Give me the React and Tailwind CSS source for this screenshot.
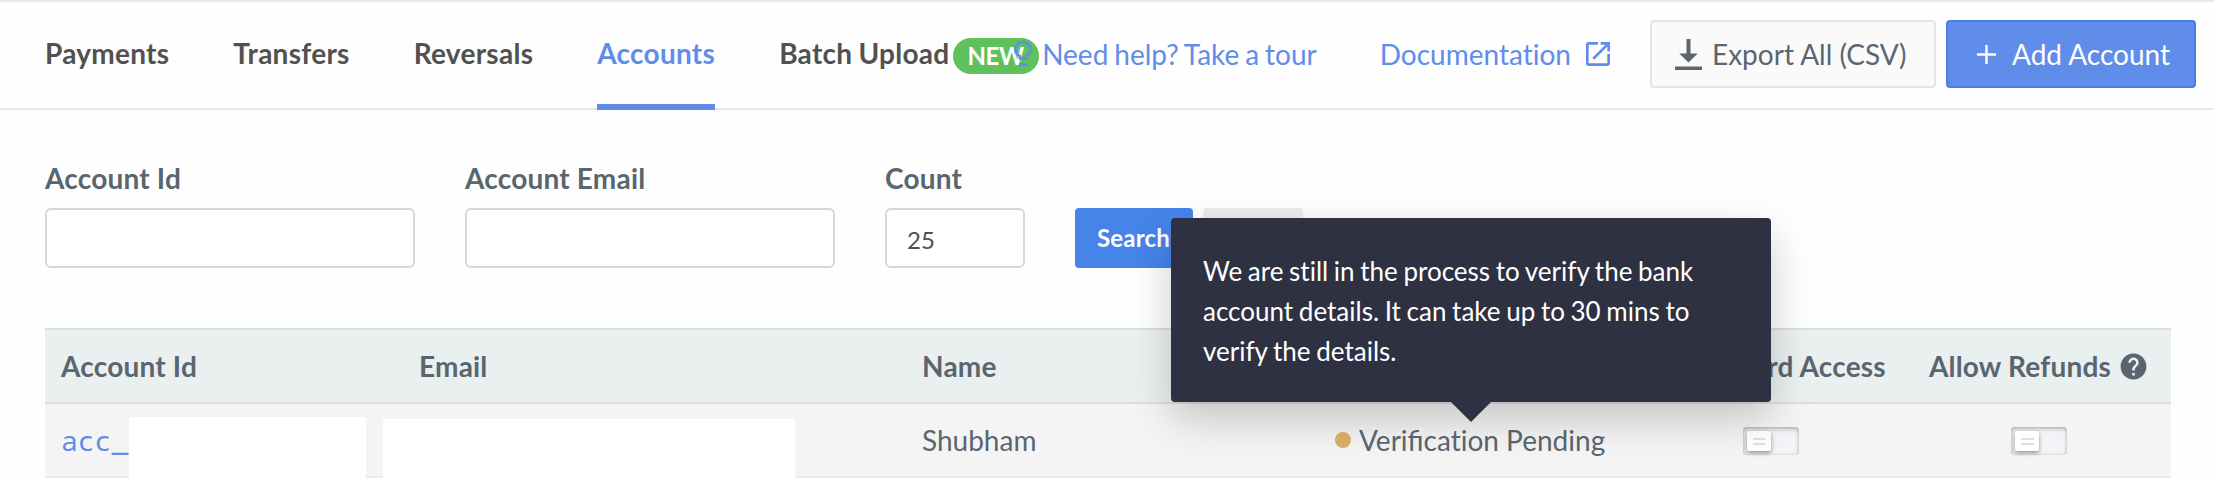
import React from 'react';

const tabs = ['Payments', 'Transfers', 'Reversals', 'Accounts'];

const BulbIcon = () => (
  <svg className="w-[18px] h-[26px] shrink-0" viewBox="0 0 18 26" fill="none">
    <path
      d="M5.8 17.6v-2.7C3.4 13.6 1.3 11.6 1.3 8.7a7.7 7.7 0 0 1 15.4 0c0 2.9-2.1 4.9-4.5 6.2v2.7z"
      stroke="#5f8de9"
      strokeWidth="2.6"
      strokeLinejoin="round"
    />
    <path d="M5 22h8v3.2H5z" fill="#5f8de9" />
  </svg>
);

const ExternalIcon = () => (
  <svg className="w-8 h-8 shrink-0" viewBox="0 0 24 24" fill="#5f8de9">
    <path d="M19 19H5V5h7V3H5a2 2 0 0 0-2 2v14a2 2 0 0 0 2 2h14c1.1 0 2-.9 2-2v-7h-2v7zM14 3v2h3.59l-9.83 9.83 1.41 1.41L19 6.41V10h2V3h-7z" />
  </svg>
);

const DownloadIcon = () => (
  <svg className="w-[27px] h-[31px] shrink-0" viewBox="0 0 27 31" fill="#5a666f">
    <path d="M11.5 0h4v14.5h7.3L13.5 23.5 4.2 14.5h7.3z" />
    <path d="M0 27.5h27V31H0z" />
  </svg>
);

const HelpIcon = () => (
  <svg className="w-[31px] h-[31px] shrink-0" viewBox="0 0 24 24" fill="#5a666f">
    <path d="M12 2C6.48 2 2 6.48 2 12s4.48 10 10 10 10-4.48 10-10S17.52 2 12 2zm1 17h-2v-2h2v2zm2.07-7.75l-.9.92C13.45 12.9 13 13.5 13 15h-2v-.5c0-1.1.45-2.1 1.17-2.83l1.24-1.26c.37-.36.59-.86.59-1.41 0-1.1-.9-2-2-2s-2 .9-2 2H8c0-2.21 1.79-4 4-4s4 1.79 4 4c0 .88-.36 1.68-.93 2.25z" />
  </svg>
);

const Toggle = () => (
  <div className="w-14 h-7 rounded-[4px] bg-[#f2f4f7] p-1 shadow-[inset_0_2px_4px_rgba(0,0,0,0.25),inset_0_0_2px_rgba(0,0,0,0.15)]">
    <div className="w-6 h-5 rounded-[2px] bg-white shadow-[0_2px_4px_rgba(0,0,0,0.4)] flex flex-col items-center justify-center gap-[3px]">
      <div className="w-[13px] h-[2px] bg-[#dbe3e3]" />
      <div className="w-[13px] h-[2px] bg-[#dbe3e3]" />
    </div>
  </div>
);

const Field = ({ label, value, width }) => (
  <label className={`flex flex-col ${width}`}>
    <span className="h-[42px] leading-[24px] font-bold tracking-[0.2px] text-[#5a666f]">{label}</span>
    <input
      className="h-[60px] w-full border-2 border-[#d0dadc] rounded-[6px] bg-white px-5 pt-[2px] text-[24px] text-[#515151]"
      defaultValue={value}
    />
  </label>
);

const App = () => {
  return (
    <div className="w-full h-[478px] overflow-hidden bg-[#fefefe] font-['Lato',sans-serif] text-[28px] text-[#5a666f] [font-variant-ligatures:none]">

      {/* Header */}
      <header className="flex h-[110px] border-y-2 border-[#e3e9ec] pl-[45px] pr-[18px]">
        <nav className="flex flex-1 min-w-0 gap-16 font-bold tracking-[0.27px] text-[#515151] -mb-[2px]">
          {tabs.map((tab) => (
            <a
              key={tab}
              className={`flex items-center shrink-0 border-b-[6px] ${tab === 'Accounts' ? 'text-[#5f8de9] border-[#5f8de9]' : 'border-transparent'}`}
            >
              {tab}
            </a>
          ))}
          <a className="flex items-center shrink-0 whitespace-nowrap border-b-[6px] border-transparent">
            <span className="[word-spacing:-1px]">Batch Upload</span>
            <span className="ml-[4px] mt-[6px] h-9 w-[86px] rounded-full bg-[#5fc05c] text-white text-[24px] leading-9 pl-[14px] tracking-[-0.3px]">
              NEW
            </span>
          </a>
        </nav>

        <div className="relative flex items-center shrink-0 pb-[2px] text-[#5f8de9]">
          <a className="flex items-center gap-[10px] mr-[63px] [word-spacing:-1.2px]">
            <BulbIcon />
            Need help? Take a tour
          </a>
          <a className="flex items-center gap-[11px] mr-[36px]">
            Documentation
            <ExternalIcon />
          </a>
          <button className="flex items-center gap-[10px] w-[286px] h-[68px] pl-[23px] mr-[10px] border-2 border-[#dfe6e8] rounded-[4px] bg-[#fafafa] text-[#5a666f]">
            <DownloadIcon />
            Export All (CSV)
          </button>
          <button className="flex items-center gap-4 w-[250px] h-[68px] pl-[29px] border-2 border-[#4b7de3] rounded-[4px] bg-[#5f8de9] text-white">
            <svg className="w-[19px] h-[19px]" viewBox="0 0 19 19" stroke="white" strokeWidth="2.4">
              <path d="M9.5 0v19M0 9.5h19" />
            </svg>
            Add Account
          </button>
        </div>
      </header>

      {/* Filters */}
      <form className="flex pl-[45px] pt-[56px]">
        <Field label="Account Id" width="w-[370px] mr-[50px]" />
        <Field label="Account Email" width="w-[370px] mr-[50px]" />
        <Field label="Count" value="25" width="w-[140px] mr-[50px]" />
        <button type="button" className="self-end w-[118px] h-[60px] pl-[22px] rounded-[4px] bg-[#4684ea] text-left text-white text-[24px] font-bold tracking-[0.2px]">
          Search
        </button>
        <button type="button" className="self-end w-[100px] h-[60px] ml-[10px] rounded-[4px] bg-[#ececec]" />
      </form>

      {/* Accounts table */}
      <section className="ml-[45px] mr-[43px] mt-[60px]">
        <div className="grid grid-cols-[358px_503px_397px_300px_1fr] items-center h-[76px] pl-4 border-y-2 border-[#dbdfe0] bg-[#eaeff0] font-bold tracking-[0.2px]">
          <div>Account Id</div>
          <div>Email</div>
          <div>Name</div>
          <div>Status</div>
          <div className="flex justify-end items-center pr-[22px] whitespace-nowrap">
            <span className="mr-[43px]">Dashboard Access</span>
            <span className="mr-[7px]">Allow Refunds</span>
            <HelpIcon />
          </div>
        </div>

        <div className="grid grid-cols-[322px_539px_413px_408px_268px_1fr] h-[74px] border-b-2 border-[#e8eeef] bg-[#f4f4f4] pl-4">
          <div className="flex h-[74px] -mb-[2px]">
            <span className="w-[68px] font-['Noto_Sans_Mono','DejaVu_Sans_Mono',monospace] text-[28px] text-[#5f8de9] leading-[72px] overflow-hidden">acc_</span>
            <div className="w-[237px] h-[61px] mt-[13px] bg-white" />
          </div>
          <div className="h-[74px] -mb-[2px] pt-[15px]">
            <div className="w-[412px] h-[59px] bg-white" />
          </div>
          <div className="leading-[72px]">Shubham</div>
          <div className="relative flex items-center gap-2 leading-[72px]">
            <span className="w-4 h-4 rounded-full bg-[#deb067]" />
            <span>
              <span className="[font-variant-ligatures:normal]">Verificat</span>ion Pending
            </span>

            {/* Tooltip */}
            <div className="absolute bottom-[74px] left-[-164px] w-[600px] h-[184px] rounded-[4px] bg-[#2e3142] px-8 pt-[33px] text-[26px] leading-10 text-white [word-spacing:-1px] shadow-[0_16px_40px_rgba(0,0,0,0.2)]">
              We are still in the process to verify the bank account details. It can take up to 30 mins to verify the details.
              <div className="absolute top-full left-[280px] border-x-[20px] border-x-transparent border-t-[20px] border-t-[#2e3142]" />
            </div>
          </div>
          <div className="flex items-center pt-[2px]"><Toggle /></div>
          <div className="flex items-center pt-[2px]"><Toggle /></div>
        </div>
      </section>

    </div>
  );
};

export default App;
